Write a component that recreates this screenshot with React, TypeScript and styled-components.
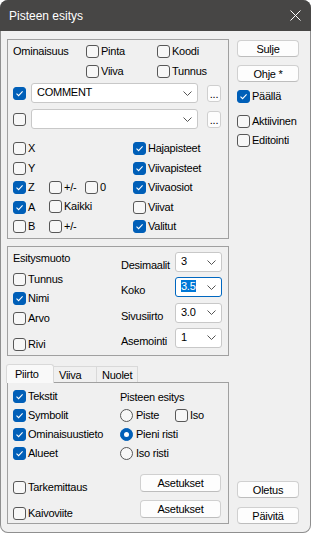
import React from "react";
import styled, { createGlobalStyle } from "styled-components";

const GlobalStyle = createGlobalStyle`
  html, body {
    margin: 0;
    padding: 0;
    background: #ffffff;
  }
  body {
    font-family: "Liberation Sans", Arial, sans-serif;
    font-size: 11px;
    letter-spacing: -0.25px;
    color: #000;
  }
  * {
    box-sizing: border-box;
  }
`;

const Window = styled.div`
  width: 311px;
  height: 533px;
  display: flex;
  flex-direction: column;
  background: #f0f0f0;
  border-radius: 8px;
  overflow: hidden;
  box-shadow: inset 0 0 0 1px #8f8f8f;
`;

const TitleBar = styled.div`
  height: 31px;
  flex: none;
  display: flex;
  align-items: center;
  justify-content: space-between;
  background: #474645;
  color: #ffffff;
  padding-left: 9px;
  font-size: 12px;
  letter-spacing: 0;
`;

const CloseBtn = styled.div`
  width: 32px;
  height: 31px;
  display: flex;
  align-items: center;
  justify-content: center;
`;

const Body = styled.div`
  flex: 1;
  min-height: 0;
  display: flex;
  padding: 8px 0 9px 7px;
`;

const LeftCol = styled.div`
  width: 222px;
  display: flex;
  flex-direction: column;
`;

const RightCol = styled.div`
  width: 62px;
  margin-left: 8px;
  display: flex;
  flex-direction: column;
`;

const Group = styled.div<{ $h: number; $mt?: number }>`
  flex: none;
  height: ${(p) => p.$h}px;
  margin-top: ${(p) => p.$mt ?? 0}px;
  border: 1px solid #a0a0a0;
  padding-left: 5px;
`;

const TopGrid = styled.div`
  display: grid;
  grid-template-columns: 73px 71px 1fr;
  grid-auto-rows: 20px;
  align-items: center;
  margin-top: 1px;
`;

const ComboRow = styled.div<{ $mt: number }>`
  display: flex;
  align-items: center;
  height: 20px;
  margin-top: ${(p) => p.$mt}px;
`;

const Combo = styled.div<{ $w: number; $ml?: number; $focus?: boolean }>`
  flex: none;
  width: ${(p) => p.$w}px;
  height: 20px;
  margin-left: ${(p) => p.$ml ?? 0}px;
  background: #ffffff;
  border: 1px solid ${(p) => (p.$focus ? "#0067c0" : "#c8c8c8")};
  border-radius: 3px;
  display: flex;
  align-items: center;
  justify-content: space-between;
  padding: 0 5px 0 5px;
  white-space: nowrap;
`;

const ComboText = styled.span`
  line-height: 13px;
  margin-top: -1px;
`;

const Selected = styled.span`
  background: #0078d7;
  color: #ffffff;
`;

const DotsBtn = styled.div`
  flex: none;
  width: 14px;
  height: 17px;
  margin-left: 9px;
  background: #fdfdfd;
  border: 1px solid #cfcfcf;
  border-radius: 3px;
  display: flex;
  align-items: center;
  justify-content: center;
  padding-top: 2px;
`;

const CheckGrid = styled.div`
  display: grid;
  grid-template-columns: 36px 36px 48px 1fr;
  grid-auto-rows: 19.5px;
  align-items: center;
  margin-top: 10px;
`;

const Span2 = styled.div`
  grid-column: span 2;
`;

const Split = styled.div`
  display: flex;
  height: 100%;
`;

const FormCol = styled.div`
  width: 108px;
  display: flex;
  flex-direction: column;
`;

const FormItem = styled.div<{ $h: number; $mt?: number }>`
  height: ${(p) => p.$h}px;
  margin-top: ${(p) => p.$mt ?? 0}px;
  display: flex;
  align-items: center;
`;

const FieldCol = styled.div`
  display: flex;
  flex-direction: column;
  gap: 5.3px;
  padding-top: 5px;
`;

const FieldRow = styled.div`
  display: flex;
  align-items: flex-end;
  height: 20px;
`;

const FieldLabel = styled.span`
  width: 54px;
  line-height: 13px;
`;

const TabStrip = styled.div`
  display: flex;
  align-items: flex-end;
  height: 18px;
  margin-top: 8px;
  margin-left: -1px;
`;

const Tab = styled.div<{ $w: number; $active?: boolean; $first?: boolean }>`
  position: relative;
  z-index: ${(p) => (p.$active ? 1 : 0)};
  width: ${(p) => p.$w}px;
  height: ${(p) => (p.$active ? 19 : 16)}px;
  margin-bottom: ${(p) => (p.$active ? -1 : 0)}px;
  border: 1px solid #d9d9d9;
  border-bottom: none;
  border-left: ${(p) => (p.$first ? "1px solid #d9d9d9" : "none")};
  border-radius: ${(p) => (p.$active ? "3px 3px 0 0" : "0")};
  background: ${(p) => (p.$active ? "#f9f9f9" : "#f0f0f0")};
  padding-left: ${(p) => (p.$active ? 8 : 5)}px;
  padding-top: ${(p) => (p.$active ? 0 : 1)}px;
  display: flex;
  align-items: center;
`;

const Panel = styled.div`
  flex: none;
  height: 142px;
  border: 1px solid #a0a0a0;
  padding: 4px 7px 0 5px;
  display: flex;
  flex-direction: column;
`;

const PanelGrid = styled.div`
  display: grid;
  grid-template-columns: 107px 1fr;
  grid-auto-rows: 19px;
  align-items: center;
`;

const Inline = styled.div`
  display: flex;
  align-items: center;
`;

const ActionRow = styled.div<{ $mt: number }>`
  display: flex;
  justify-content: space-between;
  height: 20px;
  margin-top: ${(p) => p.$mt}px;
`;

const Button = styled.div<{ $w?: number; $h?: number; $mt?: string }>`
  flex: none;
  width: ${(p) => (p.$w ? `${p.$w}px` : "100%")};
  height: ${(p) => p.$h ?? 17}px;
  margin-top: ${(p) => p.$mt ?? "0"};
  background: #fdfdfd;
  border: 1px solid #d0d0d0;
  border-bottom-color: #bdbdbd;
  border-radius: 4px;
  display: flex;
  align-items: center;
  justify-content: center;
  white-space: nowrap;
`;

const SideCheck = styled.div<{ $mt: number }>`
  margin-top: ${(p) => p.$mt}px;
  height: 13px;
  display: flex;
  align-items: center;
`;

const CheckWrap = styled.label<{ $self?: string }>`
  display: inline-flex;
  align-items: center;
  gap: 2px;
  white-space: nowrap;
  align-self: ${(p) => p.$self ?? "auto"};
  line-height: 13px;
`;

const Box = styled.span<{ $on?: boolean }>`
  flex: none;
  width: 13px;
  height: 13px;
  border-radius: 3px;
  border: 1px solid ${(p) => (p.$on ? "#005fb8" : "#575757")};
  background: ${(p) => (p.$on ? "#005fb8" : "#f7f7f7")};
  display: flex;
  align-items: center;
  justify-content: center;
`;

const RadioCircle = styled.span<{ $on?: boolean }>`
  flex: none;
  width: 13px;
  height: 13px;
  border-radius: 50%;
  border: 1px solid ${(p) => (p.$on ? "#005fb8" : "#575757")};
  background: ${(p) => (p.$on ? "#005fb8" : "#f7f7f7")};
  display: flex;
  align-items: center;
  justify-content: center;
`;

const RadioDot = styled.span`
  width: 5px;
  height: 5px;
  border-radius: 50%;
  background: #ffffff;
`;

const RadioWrap = styled.label<{ $w?: number }>`
  display: inline-flex;
  align-items: center;
  gap: 3px;
  width: ${(p) => (p.$w ? `${p.$w}px` : "auto")};
  white-space: nowrap;
  line-height: 13px;
`;

const Check = ({ label, on, self }: { label?: string; on?: boolean; self?: string }) => (
  <CheckWrap $self={self}>
    <Box $on={on}>
      {on && (
        <svg width="9" height="9" viewBox="0 0 9 9">
          <path d="M1.5 4.6 L3.6 6.6 L7.6 2.4" fill="none" stroke="#fff" strokeWidth="1.1" />
        </svg>
      )}
    </Box>
    {label && <span>{label}</span>}
  </CheckWrap>
);

const Radio = ({ label, on, w }: { label: string; on?: boolean; w?: number }) => (
  <RadioWrap $w={w}>
    <RadioCircle $on={on}>{on && <RadioDot />}</RadioCircle>
    <span>{label}</span>
  </RadioWrap>
);

const Chevron = () => (
  <svg width="9" height="5" viewBox="0 0 9 5">
    <path d="M0.5 0.5 L4.5 4.5 L8.5 0.5" fill="none" stroke="#555" strokeWidth="1" />
  </svg>
);

const Field = ({ label, value, focus }: { label: string; value: string; focus?: boolean }) => (
  <FieldRow>
    <FieldLabel>{label}</FieldLabel>
    <Combo $w={47} $focus={focus}>
      <ComboText>{focus ? <Selected>{value}</Selected> : value}</ComboText>
      <Chevron />
    </Combo>
  </FieldRow>
);

export default function App() {
  return (
    <>
      <GlobalStyle />
      <Window>
        <TitleBar>
          <span>Pisteen esitys</span>
          <CloseBtn>
            <svg width="11" height="11" viewBox="0 0 11 11">
              <path d="M0.5 0.5 L10.5 10.5 M10.5 0.5 L0.5 10.5" stroke="#fff" strokeWidth="1" />
            </svg>
          </CloseBtn>
        </TitleBar>
        <Body>
          <LeftCol>
            <Group $h={200}>
              <TopGrid>
                <span>Ominaisuus</span>
                <Check label="Pinta" />
                <Check label="Koodi" />
                <span />
                <Check label="Viiva" />
                <Check label="Tunnus" />
              </TopGrid>
              <ComboRow $mt={2}>
                <Check on />
                <Combo $w={167} $ml={5}>
                  <ComboText>COMMENT</ComboText>
                  <Chevron />
                </Combo>
                <DotsBtn>...</DotsBtn>
              </ComboRow>
              <ComboRow $mt={6}>
                <Check />
                <Combo $w={167} $ml={5}>
                  <ComboText />
                  <Chevron />
                </Combo>
                <DotsBtn>...</DotsBtn>
              </ComboRow>
              <CheckGrid>
                <Check label="X" />
                <span />
                <span />
                <Check label="Hajapisteet" on />
                <Check label="Y" />
                <span />
                <span />
                <Check label="Viivapisteet" on />
                <Check label="Z" on />
                <Check label="+/-" />
                <Check label="0" />
                <Check label="Viivaosiot" on />
                <Check label="A" on />
                <Span2>
                  <Check label="Kaikki" />
                </Span2>
                <Check label="Viivat" />
                <Check label="B" />
                <Check label="+/-" />
                <span />
                <Check label="Valitut" on />
              </CheckGrid>
            </Group>

            <Group $h={110} $mt={7}>
              <Split>
                <FormCol>
                  <FormItem $h={22}>Esitysmuoto</FormItem>
                  <FormItem $h={20}>
                    <Check label="Tunnus" />
                  </FormItem>
                  <FormItem $h={19.5}>
                    <Check label="Nimi" on />
                  </FormItem>
                  <FormItem $h={19.5}>
                    <Check label="Arvo" />
                  </FormItem>
                  <FormItem $h={20} $mt={6}>
                    <Check label="Rivi" />
                  </FormItem>
                </FormCol>
                <FieldCol>
                  <Field label="Desimaalit" value="3" />
                  <Field label="Koko" value="3.5" focus />
                  <Field label="Sivusiirto" value="3.0" />
                  <Field label="Asemointi" value="1" />
                </FieldCol>
              </Split>
            </Group>

            <TabStrip>
              <Tab $w={48} $active $first>
                Piirto
              </Tab>
              <Tab $w={43}>Viiva</Tab>
              <Tab $w={41}>Nuolet</Tab>
            </TabStrip>
            <Panel>
              <PanelGrid>
                <Check label="Tekstit" on />
                <span>Pisteen esitys</span>
                <Check label="Symbolit" on />
                <Inline>
                  <Radio label="Piste" w={55} />
                  <Check label="Iso" />
                </Inline>
                <Check label="Ominaisuustieto" on />
                <Radio label="Pieni risti" on />
                <Check label="Alueet" on />
                <Radio label="Iso risti" />
              </PanelGrid>
              <ActionRow $mt={11}>
                <Check label="Tarkemittaus" self="flex-end" />
                <Button $w={81} $h={18}>
                  Asetukset
                </Button>
              </ActionRow>
              <ActionRow $mt={6}>
                <Check label="Kaivoviite" self="flex-end" />
                <Button $w={81} $h={18}>
                  Asetukset
                </Button>
              </ActionRow>
            </Panel>
          </LeftCol>

          <RightCol>
            <Button $mt="1px">Sulje</Button>
            <Button $mt="8px">Ohje *</Button>
            <SideCheck $mt={8}>
              <Check label="Päällä" on />
            </SideCheck>
            <SideCheck $mt={11.5}>
              <Check label="Aktiivinen" />
            </SideCheck>
            <SideCheck $mt={6}>
              <Check label="Editointi" />
            </SideCheck>
            <Button $mt="auto">Oletus</Button>
            <Button $mt="9px">Päivitä</Button>
          </RightCol>
        </Body>
      </Window>
    </>
  );
}
